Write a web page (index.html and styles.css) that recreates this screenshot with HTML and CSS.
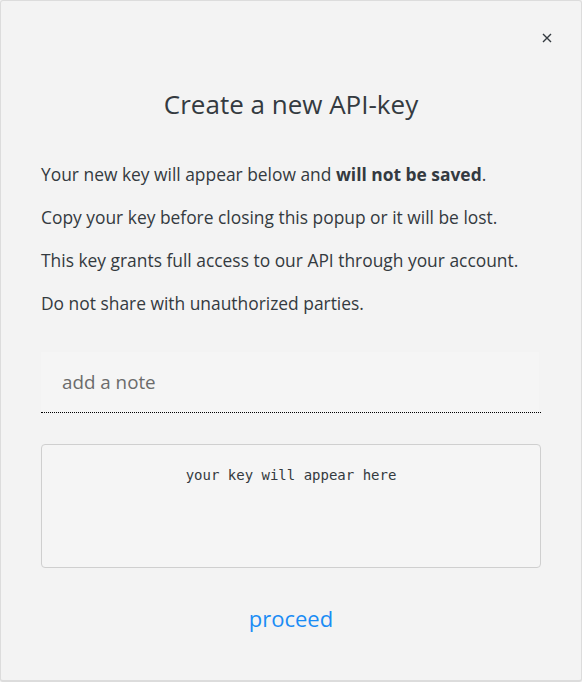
FILE: index.html
```html
<!DOCTYPE html>
<html>
<head>
<meta charset="utf-8">
<link rel="stylesheet" href="styles.css">
</head>
<body>
<div class="modal">
  <div class="top">
    <button class="close" aria-label="close">
      <svg width="10" height="10" viewBox="0 0 10 10"><path d="M1 1L9 9M9 1L1 9" stroke="#343a40" stroke-width="1.4" fill="none"/></svg>
    </button>
  </div>
  <h1 class="title">Create a new API-key</h1>
  <div class="info">
    <p>Your new key will appear below and <b>will not be saved</b>.</p>
    <p>Copy your key before closing this popup or it will be lost.</p>
    <p>This key grants full access to our API through your account.</p>
    <p>Do not share with unauthorized parties.</p>
  </div>
  <div class="note"><input type="text" placeholder="add a note"></div>
  <div class="keybox">your key will appear here</div>
  <div class="actions"><a class="proceed" href="#">proceed</a></div>
</div>
</body>
</html>
```
FILE: styles.css
```css
* { box-sizing: border-box; }
html, body { margin: 0; padding: 0; background: #f3f3f3; }
.modal {
  width: 582px;
  height: 682px;
  border: 1px solid #dcdcdc;
  border-bottom-width: 2px;
  border-radius: 3px;
  background: #f3f3f3;
  font-family: "Open Sans", sans-serif;
  color: #343a40;
  padding: 0 40px;
}
.top { display: flex; justify-content: flex-end; padding-top: 31px; margin-right: -12px; height: 43px; }
.close { background: none; border: 0; padding: 0; width: 12px; height: 12px; display: flex; align-items: center; justify-content: center; }
.title { margin: 43px 0 0; text-align: center; font-weight: 400; font-size: 26px; line-height: 34px; }
.info { margin-top: 36px; }
.info p { margin: 0 0 9px; font-size: 17.4px; line-height: 34px; }
.info b { font-weight: 700; }
.note { margin-top: 32px; border-bottom: 1px dotted #000; }
.note input {
  display: block; width: 498px; height: 60px; border: 0; background: #f5f5f5;
  font-family: "Open Sans", sans-serif; font-size: 18.8px; padding: 0 21px; color: #343a40; outline: none;
}
.note input::placeholder { color: #6b6b6b; }
.keybox {
  margin-top: 31px; height: 124px; border: 1px solid #cfcfcf; border-radius: 4px; background: #f5f5f5;
  font-family: "DejaVu Sans Mono", monospace; font-size: 14px; text-align: center; padding-top: 22px; color: #343a40;
}
.actions { text-align: center; margin-top: 35px; }
.proceed { color: #1a8cf5; text-decoration: none; font-size: 22px; }
```
